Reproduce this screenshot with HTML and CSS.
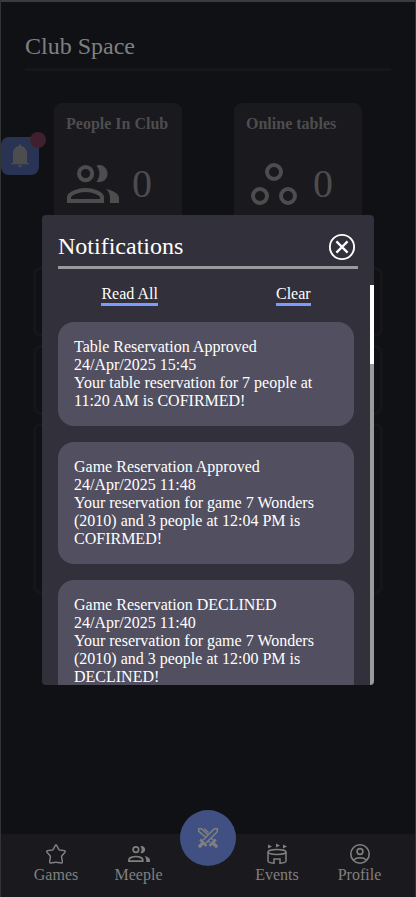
FILE: index.html
```html
<!DOCTYPE html>
<html lang="en">
<head>
<meta charset="utf-8">
<title>Club Space</title>
<link rel="stylesheet" href="styles.css">
</head>
<body>
<svg class="defs" width="0" height="0">
  <symbol id="people" viewBox="0 0 26 19">
    <circle cx="9.3" cy="4.3" r="3.3" fill="none" stroke="currentColor" stroke-width="2"/>
    <path d="M14.7 0.2a4.3 4.3 0 1 1 0 8.2c2-2.4 2-5.8 0-8.2zM19.5 12c3.2.7 6.500 2.200 6.500 4.500V19h-4.500v-2.500c0-2-.7-3.300-2-4.500z" fill="currentColor"/>
    <path d="M1 18v-1.800C1 14 6 12.500 9.300 12.500s8.200 1.500 8.200 3.700V18z" fill="none" stroke="currentColor" stroke-width="2"/>
  </symbol>
</svg>
<div class="app">
  <main class="page">
    <h1 class="page-title">Club Space</h1>
    <section class="stats">
      <article class="stat">
        <h2 class="stat-title">People In Club</h2>
        <div class="stat-row">
          <svg class="stat-people"><use href="#people"/></svg>
          <span>0</span>
        </div>
      </article>
      <article class="stat">
        <h2 class="stat-title">Online tables</h2>
        <div class="stat-row">
          <svg class="stat-tables" viewBox="0 0 46 42" fill="none" stroke="currentColor" stroke-width="4">
            <circle cx="23" cy="9" r="7"/><circle cx="9" cy="33" r="7"/><circle cx="37" cy="33" r="7"/>
          </svg>
          <span>0</span>
        </div>
      </article>
    </section>
    <section class="panels">
      <div class="panel"></div>
      <div class="panel"></div>
      <div class="panel tall"></div>
    </section>
  </main>

  <div class="bell">
    <svg width="18" height="24" viewBox="0 0 18 24" fill="currentColor"><path d="M8 2V0.500h2V2c3.500.6 6 3.500 6 7v10h2v1.300H0V19h2V9c0-3.500 2.500-6.400 6-7zM7 21.300h4c0 1-1 1.900-2 1.900s-2-.9-2-1.900z"/></svg>
    <i class="bell-dot"></i>
  </div>

  <nav class="nav">
    <a class="nav-item"><svg width="22" height="22" viewBox="0 0 22 22" fill="none" stroke="currentColor" stroke-width="1.500" stroke-linejoin="round"><path d="M11 1.800c.8 0 2.300 4.500 3.100 5 .8.600 5.700.4 6.200 1.400.4 1-3.400 4-3.700 5-.3 1.200 1.400 5.900.5 6.600-.9.600-5-.5-6.100-.5s-5.200 1.100-6.100.5c-.9-.7.8-5.400.5-6.600-.3-1-4.100-4-3.700-5 .5-1 5.400-.8 6.200-1.400.8-.5 2.300-5 3.100-5z"/></svg>Games</a>
    <a class="nav-item"><svg class="nav-people"><use href="#people"/></svg>Meeple</a>
    <a class="nav-main"><svg width="22" height="22" viewBox="0 0 22 22" fill="none" stroke="currentColor"><path stroke-width="1.500" d="M6.200 13 17.300 1.800h3v3L9 16M11.500 5.500 7.200 1.800h0M8.200 9.800 1.700 4.300V1.800h2.800L11 7.800M13 15.500l-2-1.800M16 13l-2.300-2.500"/><path stroke-width="2.600" d="m3.200 12.500 6.300 6.300M18.800 12.500l-6.300 6.300"/><path stroke-width="3.200" d="m6.500 15.500-4.600 4.600M15.500 15.500l4.600 4.600"/></svg></a>
    <a class="nav-item"><svg width="22" height="22" viewBox="0 0 22 22" fill="none" stroke="currentColor" stroke-width="1.500"><ellipse cx="11" cy="9" rx="9" ry="2.500"/><path d="M2 9v9c0 1 3 2 6 2.200V16h6v4.200c3-.2 6-1.200 6-2.200V9"/><path fill="currentColor" stroke="none" d="M2 1.500 6 3.500 2 5.500zM10 .500 14 2.500 10 4.500zM17 1.500 21 3.500 17 5.500z"/></svg>Events</a>
    <a class="nav-item"><svg width="22" height="22" viewBox="0 0 22 22" fill="none" stroke="currentColor" stroke-width="1.600"><circle cx="11" cy="11" r="9.200"/><circle cx="11" cy="8.500" r="2.900"/><path d="M4.500 17c3.500-3 9.500-3 13 0"/></svg>Profile</a>
  </nav>

  <div class="modal">
    <header class="modal-head">
      <h2 class="modal-title">Notifications</h2>
      <svg class="close" width="28" height="28" viewBox="0 0 28 28" fill="none" stroke="currentColor"><circle cx="14" cy="14" r="12.100" stroke-width="1.900"/><path stroke-width="2.200" d="m8.400 8.400 11.200 11.200M19.600 8.400 8.400 19.600"/></svg>
    </header>
    <div class="modal-body">
      <div class="modal-list">
        <div class="actions"><a class="action">Read All</a><a class="action">Clear</a></div>
        <article class="note">Table Reservation Approved<br>24/Apr/2025 15:45<br>Your table reservation for 7 people at 11:20 AM is COFIRMED!</article>
        <article class="note">Game Reservation Approved<br>24/Apr/2025 11:48<br>Your reservation for game 7 Wonders (2010) and 3 people at 12:04 PM is COFIRMED!</article>
        <article class="note">Game Reservation DECLINED<br>24/Apr/2025 11:40<br>Your reservation for game 7 Wonders (2010) and 3 people at 12:00 PM is DECLINED!</article>
      </div>
      <div class="track"><div class="thumb"></div></div>
    </div>
  </div>
</div>
</body>
</html>
```
FILE: styles.css
```css
* { box-sizing: border-box; }
body { margin: 0; font: 16px/18px "Liberation Serif", serif; background: #101115; }
h1, h2 { margin: 0; font-weight: 400; }
svg { display: block; flex: none; }
.defs { position: absolute; }
.app { position: relative; height: 897px; display: flex; flex-direction: column; overflow: hidden; border: 1px solid #333534; border-top: 2px solid #3a3b3b; border-bottom: 0; color: #808080; }
.page { flex: 1; padding: 30px 24px 0; }
.page-title { height: 39px; font-size: 24px; line-height: 29px; border-bottom: 3px solid #16171b; }
.stats { display: flex; gap: 52px; margin: 32px 29px 0; }
.stat { width: 128px; height: 132px; padding: 12px; border-radius: 8px; background: #1a191d; color: #4d4d4d; }
.stat-title { font-size: 16px; font-weight: 700; white-space: nowrap; }
.stat-row { display: flex; align-items: center; height: 44px; margin-top: 29px; font-size: 40px; }
.stat-people { width: 52px; height: 38px; margin: 0 13px 0 1px; }
.stat-tables { width: 46px; height: 42px; margin: 0 16px 0 5px; }
.panels { display: flex; flex-direction: column; gap: 8px; margin: 32px 8px 0; }
.panel { height: 70px; border: 3px solid #16161a; border-radius: 8px; }
.tall { height: 171px; }
.bell { position: absolute; left: 0; top: 135px; width: 38px; height: 38px; padding: 7px 10px; border-radius: 8px; background: #293455; color: #4d4d50; }
.bell-dot { position: absolute; right: -7px; top: -5px; width: 16px; height: 16px; border-radius: 50%; background: #41202d; }
.nav { height: 63px; padding: 0 14px; display: grid; grid-template-columns: 82px 83px 56px 82px 83px; background: #1a191d; }
.nav-item { display: flex; flex-direction: column; align-items: center; gap: 1px; padding-top: 9px; }
.nav-people { width: 22px; height: 16px; margin: 3px 0; }
.nav-main { width: 56px; height: 56px; margin-top: -24px; display: grid; place-items: center; border-radius: 50%; background: #415082; }
.modal { position: absolute; left: 41px; top: 213px; width: 332px; height: 470px; display: flex; flex-direction: column; overflow: hidden; border-radius: 4px; background: #32313b; color: #fff; }
.modal-head { height: 54px; margin: 0 16px; padding: 17px 2px 0 0; display: flex; justify-content: space-between; border-bottom: 3px solid #9a999e; }
.modal-title { font-size: 24px; line-height: 28px; }
.close { margin-top: 1px; }
.modal-body { flex: 1; min-height: 0; display: flex; }
.modal-list { flex: 1; padding: 16px 16px 0; overflow: hidden; }
.actions { display: flex; justify-content: space-between; height: 37px; padding: 0 43px; }
.action { height: 21px; padding: 0 .4px; border-bottom: 3px solid #7b9bff; }
.note { padding: 16px; margin-bottom: 16px; border-radius: 16px; background: #525060; }
.track { width: 4px; margin-top: 16px; background: #999b9a; }
.thumb { height: 79px; background: #fff; }
```
